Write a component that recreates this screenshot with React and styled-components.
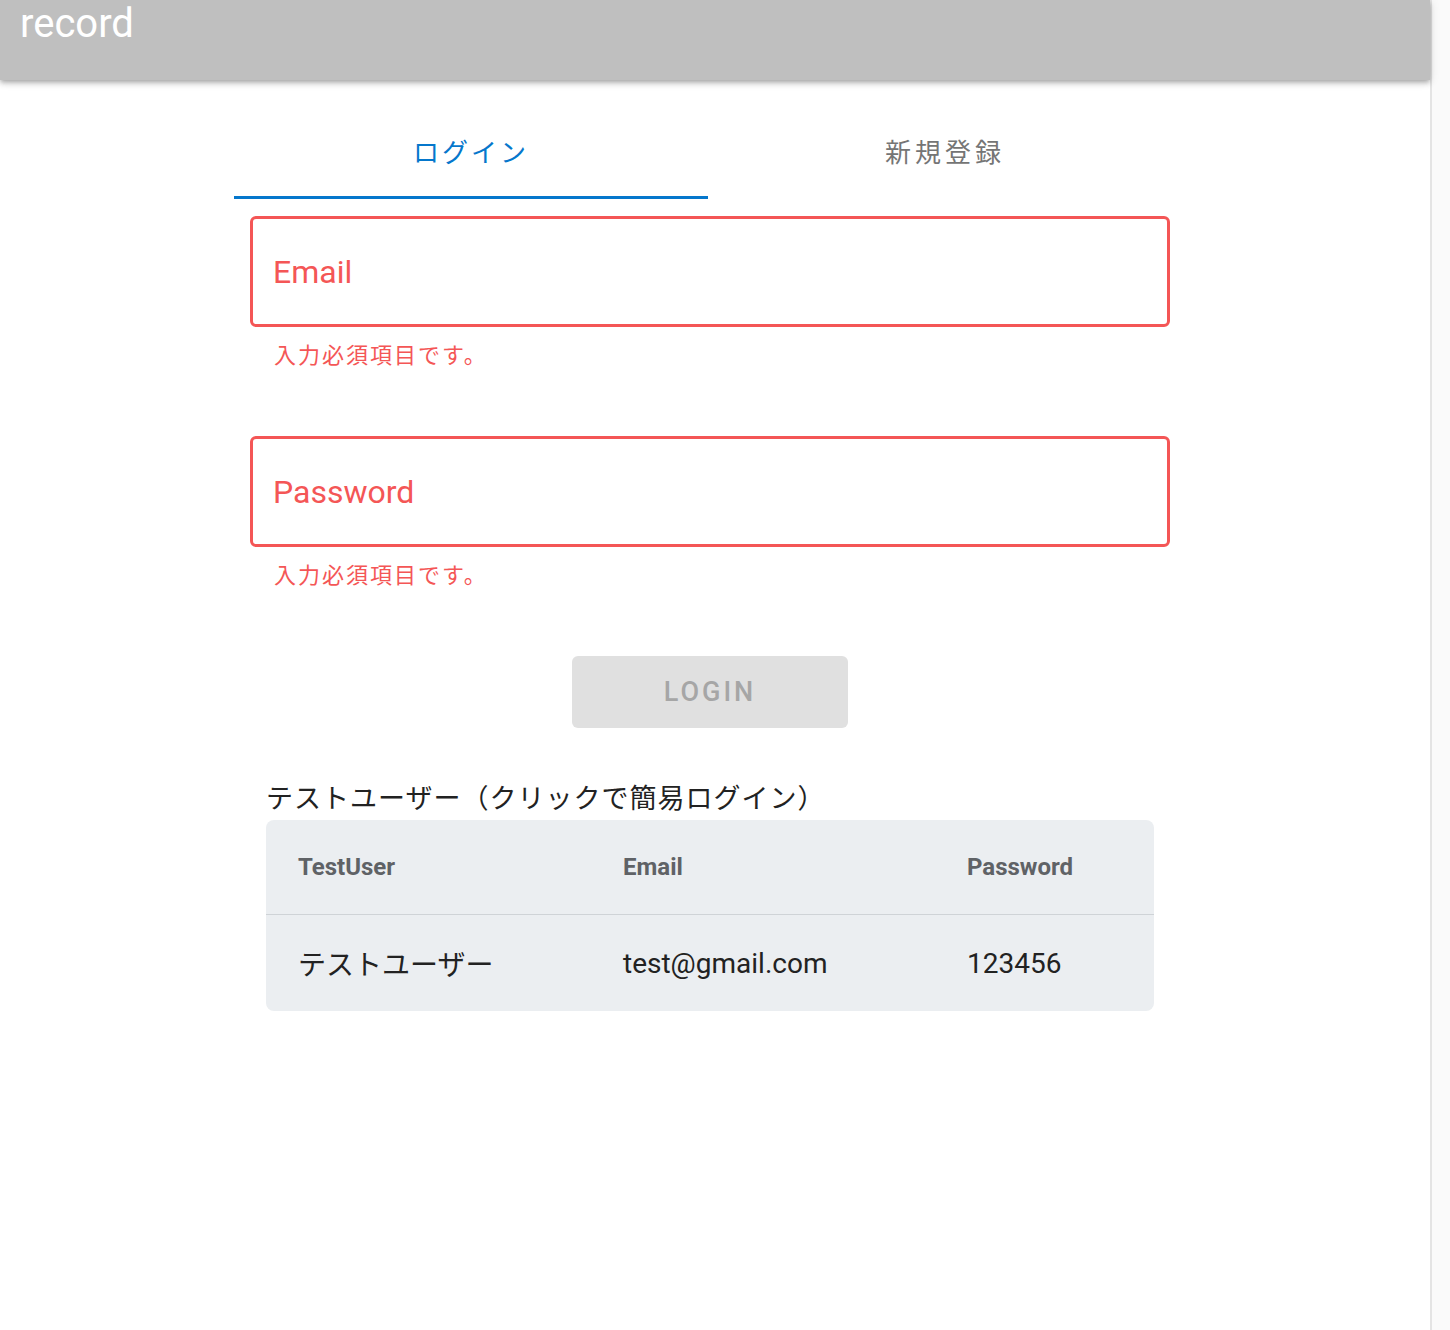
import React, { useState } from 'react';
import styled, { createGlobalStyle } from 'styled-components';

const GlobalStyle = createGlobalStyle`
  html, body {
    margin: 0;
    padding: 0;
    background: #ffffff;
  }
  body {
    font-family: Roboto, "Noto Sans CJK JP", "Noto Sans", sans-serif;
  }
`;

const colors = {
  red: '#f45656',
  blue: '#0577cc',
  gray: '#757575',
};

const testUsers = [
  { name: 'テストユーザー', email: 'test@gmail.com', password: '123456' },
];

const fields = [
  { key: 'email', label: 'Email' },
  { key: 'password', label: 'Password' },
];

export default function App() {
  const [tab, setTab] = useState(0);

  return (
    <>
      <GlobalStyle />
      <Page>
        <Main>
          <Header>
            <Brand>record</Brand>
          </Header>
          <Content>
            <Tabs>
              <Tab active={tab === 0} onClick={() => setTab(0)}>
                ログイン
              </Tab>
              <Tab active={tab === 1} onClick={() => setTab(1)}>
                新規登録
              </Tab>
            </Tabs>
            <Form>
              {fields.map((f) => (
                <Field key={f.key}>
                  <InputBox>
                    <Label>{f.label}</Label>
                  </InputBox>
                  <ErrorText>入力必須項目です。</ErrorText>
                </Field>
              ))}
              <ButtonRow>
                <LoginButton disabled>LOGIN</LoginButton>
              </ButtonRow>
              <Caption>テストユーザー（クリックで簡易ログイン）</Caption>
              <Table>
                <HeadRow>
                  <HeadCell>TestUser</HeadCell>
                  <HeadCell>Email</HeadCell>
                  <HeadCell>Password</HeadCell>
                </HeadRow>
                {testUsers.map((u) => (
                  <BodyRow key={u.email}>
                    <BodyCell>{u.name}</BodyCell>
                    <BodyCell>{u.email}</BodyCell>
                    <BodyCell>{u.password}</BodyCell>
                  </BodyRow>
                ))}
              </Table>
            </Form>
          </Content>
        </Main>
        <ScrollTrack />
      </Page>
    </>
  );
}

const Page = styled('div')`
  display: flex;
  min-height: 100vh;
  width: 100%;
`;

const Main = styled('div')`
  flex: 1;
  min-width: 0;
`;

const ScrollTrack = styled('div')`
  width: 18px;
  flex-shrink: 0;
  background: #fafafa;
  border-left: 2px solid #e4e4e4;
`;

const Header = styled('header')`
  height: 80px;
  background: #bfbfbf;
  box-shadow: 0 2px 4px -1px rgba(0, 0, 0, 0.2), 0 4px 5px 0 rgba(0, 0, 0, 0.14),
    0 1px 10px 0 rgba(0, 0, 0, 0.12);
  position: relative;
  z-index: 1;
`;

const Brand = styled('div')`
  padding: 4px 0 0 20px;
  font-family: Roboto, sans-serif;
  font-size: 40px;
  line-height: 40px;
  color: #ffffff;
`;

const Content = styled('div')`
  padding-left: 234px;
  padding-top: 24px;
`;

const Tabs = styled('div')`
  display: flex;
  width: 948px;
`;

const Tab = styled('div')`
  flex: 1;
  height: 95px;
  box-sizing: border-box;
  display: flex;
  align-items: center;
  justify-content: center;
  font-family: "Noto Sans CJK JP", sans-serif;
  font-size: 26px;
  letter-spacing: ${(p) => (p.active ? '3px' : '4px')};
  cursor: pointer;
  color: ${(p) => (p.active ? colors.blue : colors.gray)};
  border-bottom: 3px solid ${(p) => (p.active ? colors.blue : 'transparent')};
`;

const Form = styled('div')`
  width: 920px;
  margin-left: 16px;
  padding-top: 17px;
`;

const Field = styled('div')`
  margin-bottom: 68px;
`;

const InputBox = styled('div')`
  height: 111px;
  box-sizing: border-box;
  border: 3px solid ${colors.red};
  border-radius: 6px;
  display: flex;
  align-items: center;
  padding-left: 20px;
`;

const Label = styled('span')`
  font-family: Roboto, sans-serif;
  font-size: 32px;
  color: ${colors.red};
`;

const ErrorText = styled('div')`
  margin-top: 11px;
  padding-left: 24px;
  font-family: "Noto Sans CJK JP", sans-serif;
  font-size: 22px;
  letter-spacing: 2px;
  line-height: 30px;
  color: ${colors.red};
`;

const ButtonRow = styled('div')`
  display: flex;
  justify-content: center;
`;

const LoginButton = styled('button')`
  width: 276px;
  height: 72px;
  border: none;
  border-radius: 6px;
  background: #e0e0e0;
  color: #a6a6a6;
  font-family: Roboto, sans-serif;
  font-weight: 500;
  font-size: 27px;
  letter-spacing: 3px;
  padding: 0;
`;

const Caption = styled('div')`
  margin: 51px 0 5px 16px;
  font-family: "Noto Sans CJK JP", sans-serif;
  font-size: 27px;
  letter-spacing: 1px;
  line-height: 36px;
  color: #222222;
`;

const Table = styled('div')`
  margin: 0 16px;
  background: #ebeef1;
  border-radius: 8px;
  overflow: hidden;
`;

const HeadRow = styled('div')`
  display: grid;
  grid-template-columns: 325px 344px 1fr;
  height: 94px;
  align-items: center;
  border-bottom: 1px solid #cfd3d7;
`;

const BodyRow = styled(HeadRow)`
  height: 96px;
  border-bottom: none;
`;

const HeadCell = styled('div')`
  padding-left: 32px;
  font-family: Roboto, sans-serif;
  font-weight: 700;
  font-size: 24px;
  color: #5f6266;
`;

const BodyCell = styled('div')`
  padding-left: 32px;
  font-family: Roboto, "Noto Sans CJK JP", sans-serif;
  font-size: 28px;
  color: #222222;
`;
